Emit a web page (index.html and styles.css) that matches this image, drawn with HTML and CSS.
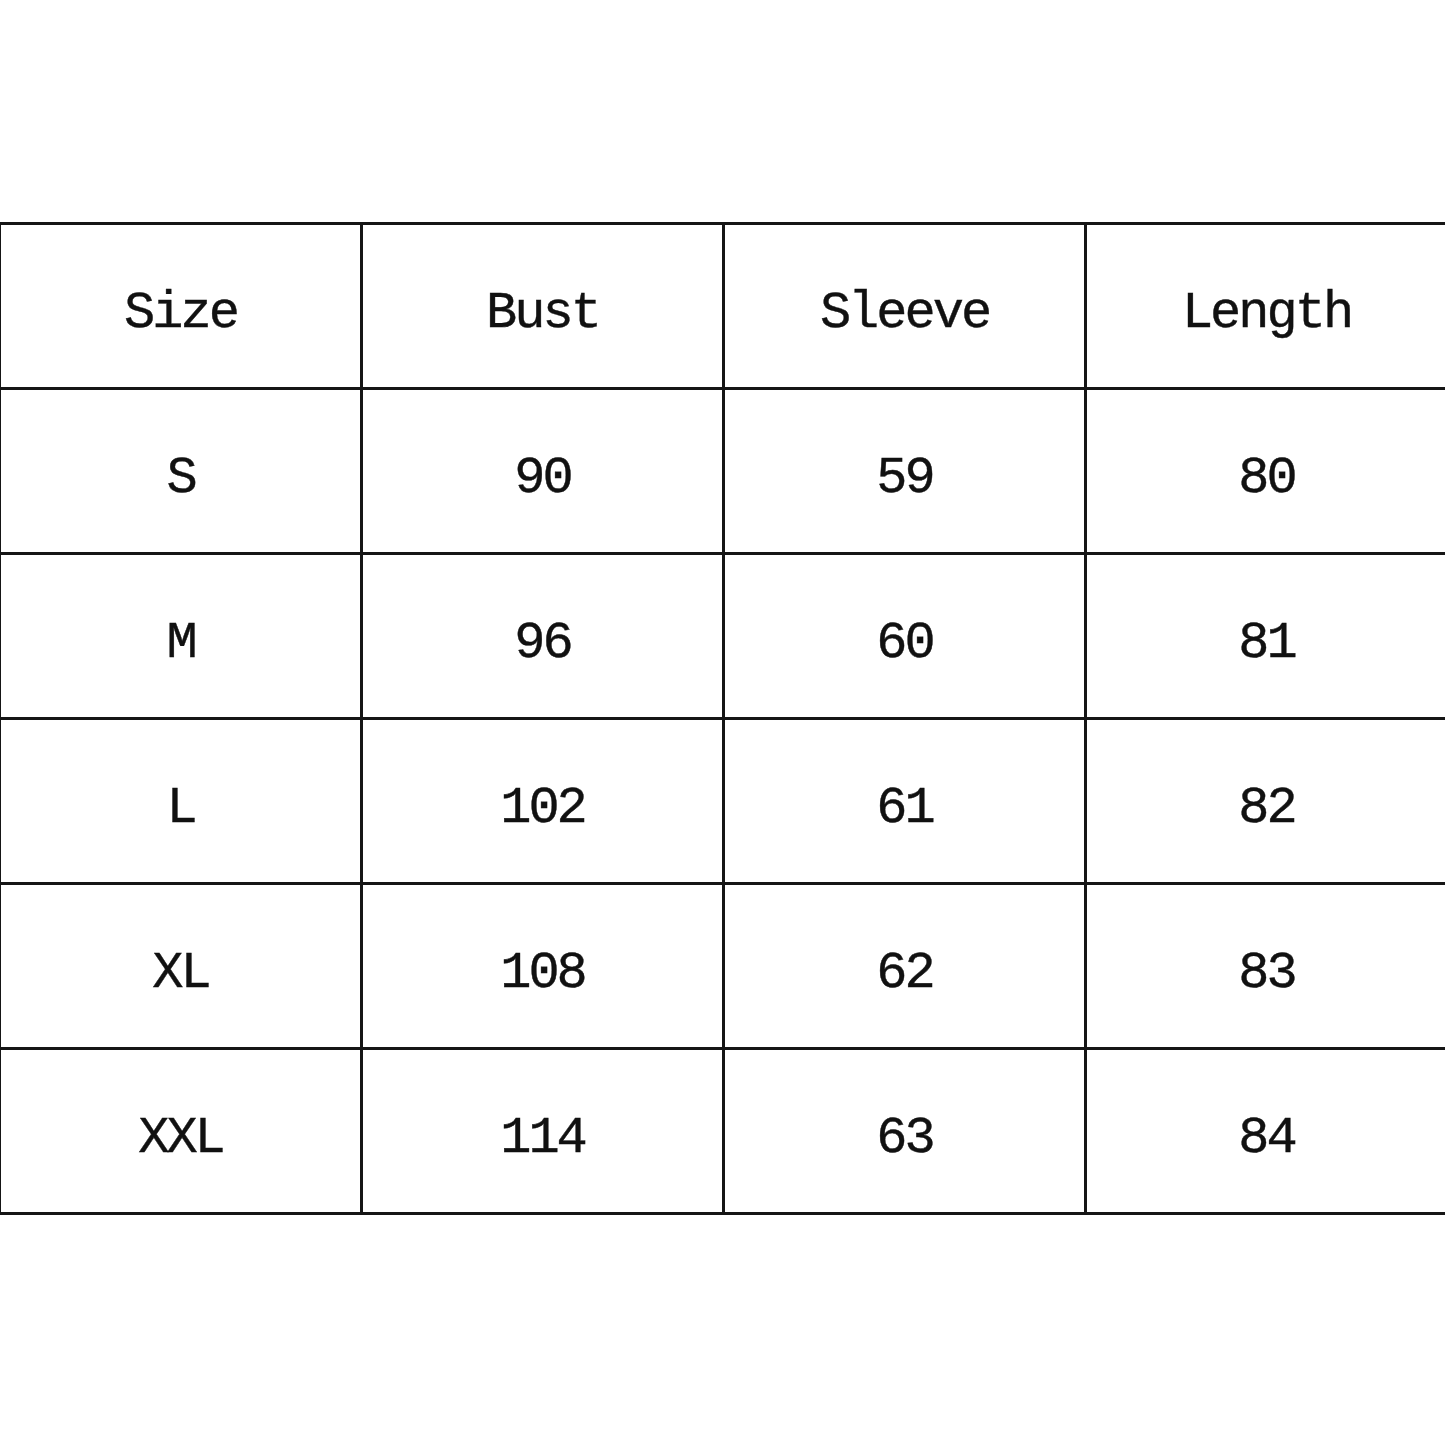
FILE: index.html
```html
<!DOCTYPE html>
<html>
<head>
<meta charset="utf-8">
<link rel="stylesheet" href="styles.css">
</head>
<body>
<div class="page">
<table class="chart">
<tr><td>Size</td><td>Bust</td><td>Sleeve</td><td>Length</td></tr>
<tr><td>S</td><td>90</td><td>59</td><td>80</td></tr>
<tr><td>M</td><td>96</td><td>60</td><td>81</td></tr>
<tr><td>L</td><td>102</td><td>61</td><td>82</td></tr>
<tr><td>XL</td><td>108</td><td>62</td><td>83</td></tr>
<tr><td>XXL</td><td>114</td><td>63</td><td>84</td></tr>
</table>
</div>
</body>
</html>
```
FILE: styles.css
```css
html, body {
  margin: 0;
  padding: 0;
  background: #fff;
}
.page {
  width: 1445px;
  height: 1445px;
  overflow: hidden;
  padding-top: 222px;
  box-sizing: border-box;
}
.chart {
  border-collapse: collapse;
  margin-left: -2px;
  table-layout: fixed;
  width: 1451px;
}
.chart td {
  border: 3px solid #151515;
  width: 25%;
  height: 165px;
  padding: 15px 0 0 0;
  box-sizing: border-box;
  text-align: center;
  vertical-align: middle;
  font-family: "Liberation Mono", "Courier New", monospace;
  font-size: 52px;
  letter-spacing: -3px;
  color: #111;
  -webkit-text-stroke: 0.4px #111;
}
```
